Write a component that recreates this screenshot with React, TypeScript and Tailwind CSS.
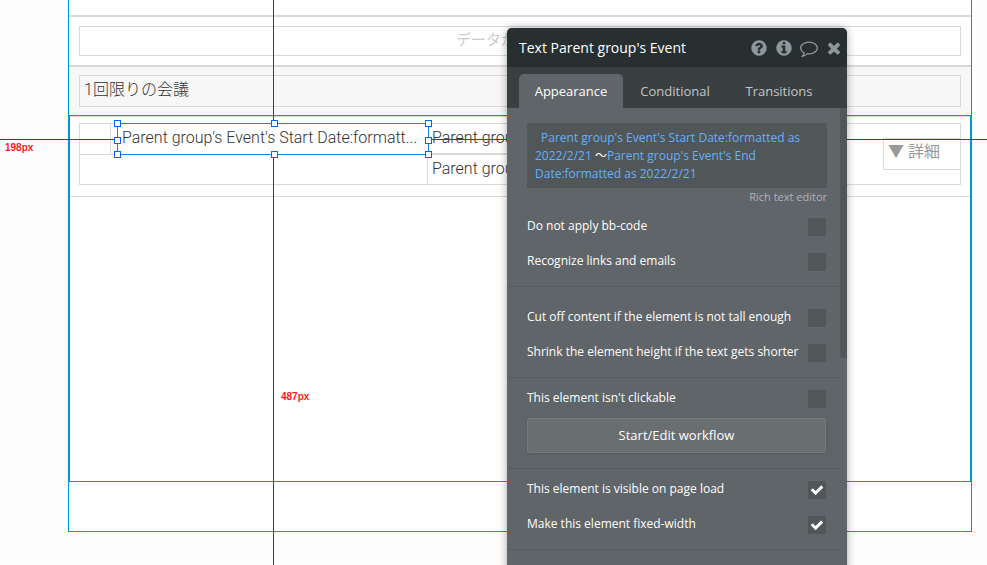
import { useState, type ReactNode } from "react";

const ICONS = {
  help: "M1024 1376v-192q0-14-9-23t-23-9h-192q-14 0-23 9t-9 23v192q0 14 9 23t23 9h192q14 0 23-9t9-23zm256-672q0-88-55.5-163t-138.5-116-170-41q-243 0-371 213-15 24 8 42l132 100q7 6 19 6 16 0 25-12 53-68 86-92 34-24 86-24 48 0 85.5 26t37.5 59q0 38-20 61t-68 45q-63 28-115.5 86.5t-52.5 125.5v36q0 14 9 23t23 9h192q14 0 23-9t9-23q0-19 21.5-49.5t54.5-49.5q32-18 49-28.5t46-35 44.5-48 28-60.5 12.5-81zm384 192q0 209-103 385.5t-279.5 279.5-385.5 103-385.5-103-279.5-279.5-103-385.5 103-385.5 279.5-279.5 385.5-103 385.5 103 279.5 279.5 103 385.5z",
  info: "M1152 1376v-160q0-14-9-23t-23-9h-96v-512q0-14-9-23t-23-9h-320q-14 0-23 9t-9 23v160q0 14 9 23t23 9h96v320h-96q-14 0-23 9t-9 23v160q0 14 9 23t23 9h448q14 0 23-9t9-23zm-128-896v-160q0-14-9-23t-23-9h-192q-14 0-23 9t-9 23v160q0 14 9 23t23 9h192q14 0 23-9t9-23zm640 416q0 209-103 385.5t-279.5 279.5-385.5 103-385.5-103-279.5-279.5-103-385.5 103-385.5 279.5-279.5 385.5-103 385.5 103 279.5 279.5 103 385.5z",
  comment:
    "M896 384q-204 0-381.5 69.5t-282 187.5-104.5 255q0 112 71.5 213.5t201.5 175.5l87 50-27 96q-24 91-70 172 152-63 275-171l43-38 57 6q69 8 130 8 204 0 381.5-69.5t282-187.5 104.5-255-104.5-255-282-187.5-381.5-69.5zm896 512q0 174-120 321.5t-326 233-450 85.5q-70 0-145-8-198 175-460 242-49 14-114 22h-5q-15 0-27-10.5t-16-27.5v-1q-3-4-.5-12t2-10 4.5-9.5l6-9 7-8.5 8-9q7-8 31-34.5t34.5-38 31-39.5 32.5-51 27-59 26-76q-157-89-247.5-220t-90.5-281q0-174 120-321.5t326-233 450-85.5 450 85.5 326 233 120 321.5z",
  close:
    "M1490 1322q0 40-28 68l-136 136q-28 28-68 28t-68-28l-294-294-294 294q-28 28-68 28t-68-28l-136-136q-28-28-28-68t28-68l294-294-294-294q-28-28-28-68t28-68l136-136q28-28 68-28t68 28l294 294 294-294q28-28 68-28t68 28l136 136q28 28 28 68t-28 68l-294 294 294 294q28 28 28 68z",
  check:
    "M1671 566q0 40-28 68l-724 724-136 136q-28 28-68 28t-68-28l-136-136-362-362q-28-28-28-68t28-68l136-136q28-28 68-28t68 28l294 295 656-657q28-28 68-28t68 28l136 136q28 28 28 68z",
};

const HEADER_BUTTONS = [
  { label: "Help", icon: ICONS.help },
  { label: "Info", icon: ICONS.info },
  { label: "Comment", icon: ICONS.comment },
  { label: "Close", icon: ICONS.close },
];

const TABS = ["Appearance", "Conditional", "Transitions"];

const HANDLES = [
  "-left-1 -top-1",
  "left-[153px] -top-1",
  "-right-1 -top-1",
  "-left-1 top-[13px]",
  "-right-1 top-[13px]",
  "-left-1 -bottom-1",
  "left-[153px] -bottom-1",
  "-right-1 -bottom-1",
];

function Icon({ path, className }: { path: string; className: string }) {
  return (
    <svg viewBox="0 0 1792 1792" fill="currentColor" className={className} aria-hidden="true">
      <path d={path} />
    </svg>
  );
}

function CheckRow({ label, checked = false }: { label: string; checked?: boolean }) {
  const [on, setOn] = useState(checked);
  return (
    <label className="flex h-[18px] items-center justify-between">
      <span className="whitespace-nowrap pb-[2px]">{label}</span>
      <span className="grid place-items-center">
        <input
          type="checkbox"
          checked={on}
          onChange={() => setOn(!on)}
          className="col-start-1 row-start-1 size-[18px] appearance-none bg-[#515659]"
        />
        {on && (
          <Icon
            path={ICONS.check}
            className="pointer-events-none col-start-1 row-start-1 size-[14px] text-white"
          />
        )}
      </span>
    </label>
  );
}

function Section({ className, children }: { className: string; children: ReactNode }) {
  return (
    <section className={`flex flex-col border-b border-[#565b5f] pl-5 pr-[14px] ${className}`}>
      {children}
    </section>
  );
}

function PropertyEditor() {
  const [tab, setTab] = useState("Appearance");
  return (
    <aside className="absolute left-[507px] top-7 z-20 flex h-[600px] w-[340px] flex-col overflow-hidden rounded-t-[5px] bg-[#5f6568] font-['Open_Sans','Noto_Sans_CJK_JP',sans-serif] text-xs font-normal text-white shadow-[0_0_8px_rgba(0,0,0,0.35)]">
      <header className="flex h-[39px] shrink-0 items-center justify-between bg-[#282f31] pl-3 pr-1">
        <h1 className="text-sm font-medium text-white">Text Parent group's Event</h1>
        <div className="flex gap-[7px] pt-px text-[#8d989c]">
          {HEADER_BUTTONS.map((b) => (
            <button key={b.label} type="button" aria-label={b.label}>
              <Icon path={b.icon} className="size-[18px]" />
            </button>
          ))}
        </div>
      </header>

      <nav role="tablist" className="flex h-[41px] shrink-0 items-end bg-[#3a3f41] pl-3">
        {TABS.map((t) => (
          <button
            key={t}
            type="button"
            role="tab"
            aria-selected={t === tab}
            onClick={() => setTab(t)}
            className={`h-[34px] w-[104px] rounded-t-[5px] pt-px text-[13px] font-medium ${
              t === tab ? "bg-[#5f6568] text-white" : "text-[#c4c6c7]"
            }`}
          >
            {t}
          </button>
        ))}
      </nav>

      <div className="flex">
        <div className="min-w-0 flex-1">
          <Section className="pb-[15px] pt-[15px]">
            <div
              role="textbox"
              aria-label="Text"
              contentEditable
              suppressContentEditableWarning
              className="-mr-px h-[65px] bg-[#515659] px-2 pt-[6px] leading-[18px] text-[#64b0fa] outline-none"
            >
              <span className="ml-[6px]">Parent group's Event's Start Date:formatted as</span>
              <br />
              2022/2/21 <span className="text-white">～</span>Parent group's Event's End
              <br />
              Date:formatted as 2022/2/21
            </div>
            <a href="#rich" className="-mr-px self-end text-[11px] leading-[18px] text-[#b0b3b5]">
              Rich text editor
            </a>
            <div className="mt-3 flex flex-col gap-[17px]">
              <CheckRow label="Do not apply bb-code" />
              <CheckRow label="Recognize links and emails" />
            </div>
          </Section>
          <Section className="gap-[17px] pb-[15px] pt-[22px]">
            <CheckRow label="Cut off content if the element is not tall enough" />
            <CheckRow label="Shrink the element height if the text gets shorter" />
          </Section>
          <Section className="gap-[10px] pb-[15px] pt-3">
            <CheckRow label="This element isn't clickable" />
            <button
              type="button"
              className="h-[35px] rounded-[2px] border border-[#747a7d] bg-[#696e71] text-[13px] shadow-sm"
            >
              Start/Edit workflow
            </button>
          </Section>
          <Section className="gap-[17px] pb-[15px] pt-3">
            <CheckRow label="This element is visible on page load" checked />
            <CheckRow label="Make this element fixed-width" checked />
          </Section>
        </div>
        <div className="h-[250px] w-[7px] bg-[#515659]" />
      </div>
    </aside>
  );
}

function SelectedElement() {
  return (
    <div className="relative z-10 -ml-px -mt-px h-8 w-[312px] border border-[#1a82e2] bg-white px-1 leading-[28px]">
      <p className="whitespace-nowrap">Parent group's Event's Start Date:formatt...</p>
      {HANDLES.map((pos) => (
        <span key={pos} className={`absolute size-[7px] border border-[#0a62f0] bg-white ${pos}`} />
      ))}
    </div>
  );
}

function Guides() {
  return (
    <div className="pointer-events-none font-['Liberation_Sans',sans-serif] text-[10px] font-bold leading-3 text-[#ff1a1a]">
      <div className="absolute inset-y-0 left-[273px] w-px bg-[#d40000]" />
      <div className="absolute inset-x-0 top-[139px] h-px bg-[#d40000]" />
      <span className="absolute left-[5px] top-[142px]">198px</span>
      <span className="absolute left-[281px] top-[391px]">487px</span>
    </div>
  );
}

function EventRow() {
  return (
    <div className="border-b border-t border-[#d9d9d9] px-[9px] pb-[11px] pt-[6px]">
      <div className="flex h-[62px] justify-between border border-[#d9d9d9]">
        <div className="flex">
          <div className="h-[31px] w-[38px] border-b border-[#d9d9d9] pr-[7px]">
            <div className="h-full border-r border-[#d9d9d9]" />
          </div>
          <SelectedElement />
        </div>
        <div className="-ml-[2px] flex-1 border-l border-[#d9d9d9] leading-[28px]">
          <p className="h-[31px] w-3/4 border-b-2 border-[#d9d9d9] pl-1">Parent group's</p>
          <p className="pl-1">Parent group's</p>
        </div>
        <button
          type="button"
          className="-ml-[77px] mt-[14px] h-8 w-[77px] border-y border-l border-[#d9d9d9] bg-white pb-1 pl-1 text-left font-normal text-[#999]"
        >
          ▼ 詳細
        </button>
      </div>
    </div>
  );
}

export default function App() {
  return (
    <main className="relative h-screen overflow-hidden bg-[#fdfdfd] font-['Roboto','Noto_Sans_CJK_JP',sans-serif] text-base font-light text-[#333]">
      <div className="ml-[68px] mr-[15px] border-x border-b border-[#0099cc] bg-white pb-[49px]">
        <div className="h-[17px] border-b-2 border-[#d9d9d9]" />
        <div className="border-b-2 border-[#d9d9d9] px-[10px] py-[9px]">
          <p className="h-[30px] border border-[#d9d9d9] pl-[376px] text-[15px] leading-[26px] font-normal text-[#ccc]">
            データが
          </p>
        </div>
        <div className="bg-[#f7f7f7] px-[10px] py-2">
          <h2 className="h-8 border border-[#d9d9d9] pl-1 leading-[27px]">1回限りの会議</h2>
        </div>
        <div className="h-[367px] border border-[#0099cc]">
          <EventRow />
        </div>
      </div>
      <Guides />
      <PropertyEditor />
    </main>
  );
}
